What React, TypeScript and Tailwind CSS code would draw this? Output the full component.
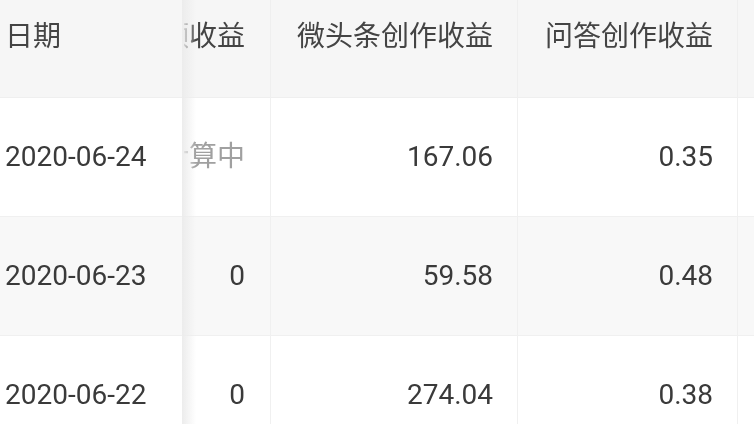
const rows = [
  { date: "2020-06-24", video: "计算中", pending: true, micro: "167.06", qa: "0.35", bg: "bg-white" },
  { date: "2020-06-23", video: "0", pending: false, micro: "59.58", qa: "0.48", bg: "bg-[#f8f8f8]" },
  { date: "2020-06-22", video: "0", pending: false, micro: "274.04", qa: "0.38", bg: "bg-white" },
];

export default function App() {
  return (
    <div className="relative w-[754px] h-[424px] overflow-hidden bg-white font-['Roboto','Noto_Sans_CJK_SC',sans-serif] text-[28px] text-[#3a3a3a] blur-[0.5px]">
      {/* header */}
      <div className="flex h-[98px] bg-[#f6f6f6] border-b border-[#efefef]">
        <div className="w-[184px] shrink-0 flex items-center pb-[24px] pl-[5px] text-[#444]">日期</div>
        <div className="w-[86px] shrink-0 flex items-center justify-end overflow-hidden whitespace-nowrap pb-[24px] pr-[25px] text-[#444]">
          视频收益
        </div>
        <div className="w-[247px] shrink-0 flex items-center justify-end pb-[24px] pr-[24px] border-l border-[#efefef] text-[#444]">
          微头条创作收益
        </div>
        <div className="w-[220px] shrink-0 flex items-center justify-end pb-[24px] pr-[24px] border-l border-[#efefef] text-[#444]">
          问答创作收益
        </div>
        <div className="flex-1 border-l border-[#efefef]" />
      </div>

      {rows.map((r) => (
        <div key={r.date} className={`flex h-[119px] border-b border-[#f0f0f0] ${r.bg}`}>
          <div className="w-[184px] shrink-0 flex items-center pl-[5px]">{r.date}</div>
          <div
            className={`w-[86px] shrink-0 flex items-center justify-end overflow-hidden whitespace-nowrap pr-[25px] ${
              r.pending ? "text-[#a0a0a0]" : ""
            }`}
          >
            {r.video}
          </div>
          <div className="w-[247px] shrink-0 flex items-center justify-end pr-[24px] border-l border-[#f0f0f0]">
            {r.micro}
          </div>
          <div className="w-[220px] shrink-0 flex items-center justify-end pr-[24px] border-l border-[#f0f0f0]">
            {r.qa}
          </div>
          <div className="flex-1 border-l border-[#f0f0f0]" />
        </div>
      ))}

      {/* fixed column shadow */}
      <div className="absolute top-0 bottom-0 left-[182px] w-[14px] bg-gradient-to-r from-[#ececec] to-transparent" />
    </div>
  );
}
